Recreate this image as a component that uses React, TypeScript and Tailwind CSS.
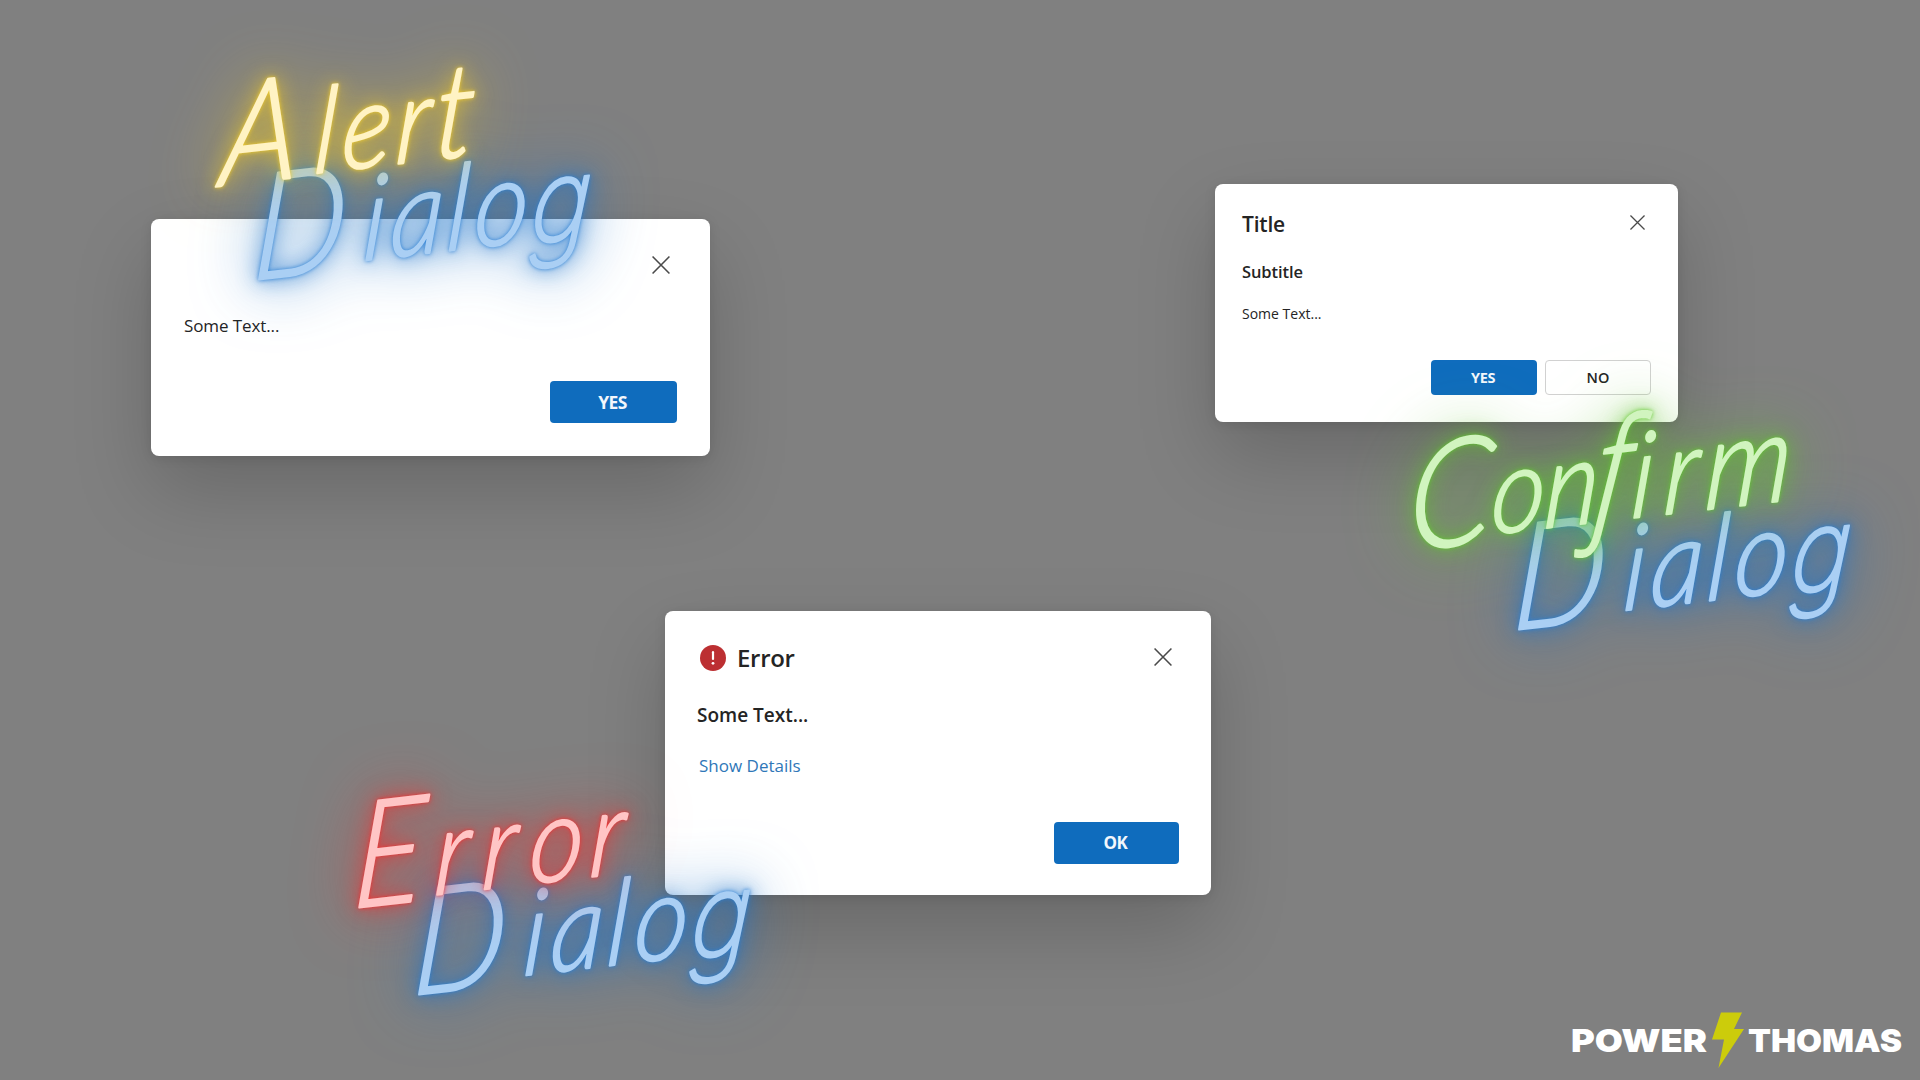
import React from "react";

type Face = "Lato" | "Open Sans" | "Inter";
type Glyph = { ch: string; x: number; size?: number; dy?: number; face?: Face };

const DIALOG: Glyph[] = [
  { ch: "D", x: -3, size: 152, dy: 7 },
  { ch: "i", x: 125 },
  { ch: "a", x: 157 },
  { ch: "l", x: 222 },
  { ch: "o", x: 254 },
  { ch: "g", x: 320, size: 118, dy: 4, face: "Inter" },
];
const ALERT: Glyph[] = [
  { ch: "A", x: 8, size: 148, dy: 2 },
  { ch: "l", x: 117 },
  { ch: "e", x: 149 },
  { ch: "r", x: 212 },
  { ch: "t", x: 257, size: 134 },
];
const CONFIRM: Glyph[] = [
  { ch: "C", x: 1, size: 154, dy: 7 },
  { ch: "o", x: 97 },
  { ch: "n", x: 159 },
  { ch: "f", x: 217, size: 142, face: "Open Sans" },
  { ch: "i", x: 260 },
  { ch: "r", x: 298 },
  { ch: "m", x: 346, size: 128 },
];
const ERROR: Glyph[] = [
  { ch: "E", x: -3, size: 152, dy: 4 },
  { ch: "r", x: 92 },
  { ch: "r", x: 147 },
  { ch: "o", x: 202 },
  { ch: "r", x: 272 },
];

const FACES: Record<Face, string> = {
  Lato: "font-['Lato']",
  "Open Sans": "font-['Open_Sans']",
  Inter: "font-['Inter'] font-extralight",
};

const TONES = {
  yellow: "fill-[#fff3c4] stroke-[#fff3c4] [filter:drop-shadow(0_0_2px_#f5cf2a)_drop-shadow(0_0_10px_#e8c52ac0)_drop-shadow(0_0_30px_#e8c52ab0)]",
  blue: "fill-[#aacff4] stroke-[#aacff4] [filter:drop-shadow(0_0_2px_#2a7fd4)_drop-shadow(0_0_10px_#1f74c9c0)_drop-shadow(0_0_30px_#1f74c9b0)]",
  green: "fill-[#d1f4bf] stroke-[#d1f4bf] [filter:drop-shadow(0_0_2px_#63c92f)_drop-shadow(0_0_10px_#5fc02cc0)_drop-shadow(0_0_30px_#5fc02cb0)]",
  red: "fill-[#ffc5c5] stroke-[#ffc5c5] [filter:drop-shadow(0_0_2px_#f53030)_drop-shadow(0_0_10px_#ee3535c0)_drop-shadow(0_0_30px_#ee3535b0)]",
};

function NeonWord({ glyphs, x, y, tone }: { glyphs: Glyph[]; x: number; y: number; tone: keyof typeof TONES }) {
  return (
    <g className={TONES[tone]}>
      <text
        transform={`matrix(.86 -.099 -.07 .98 ${x} ${y})`}
        className="font-light italic"
        fontSize={122}
        strokeWidth={2.4}
        strokeLinejoin="round"
      >
        {glyphs.map((g, i) => (
          <tspan key={i} x={g.x} y={g.dy ?? 0} fontSize={g.size} className={FACES[g.face ?? "Lato"]}>
            {g.ch}
          </tspan>
        ))}
      </text>
    </g>
  );
}

function Close({ className }: { className: string }) {
  return (
    <svg viewBox="0 0 16 16" className={className} fill="none" stroke="#4a4a4a" strokeWidth="1.4">
      <path d="M.5.5l15 15M15.5.5l-15 15" />
    </svg>
  );
}

const card = "absolute flex flex-col rounded-lg bg-white text-[#242424] shadow-[0_34px_80px_rgba(0,0,0,0.19),0_2px_12px_rgba(0,0,0,0.1)]";
const primary = "flex items-center justify-center rounded bg-[#0f6cbd] font-bold text-[#f2f7fc]";

export default function App() {
  return (
    <main className="relative h-[1080px] w-[1920px] overflow-hidden bg-[#808080] font-['Open_Sans','Noto_Sans',sans-serif]">
      <section className={`${card} left-[151px] top-[219px] h-[237px] w-[559px] px-[33px]`}>
        <header className="flex h-[38px] justify-end pr-[7px] pt-[37px]">
          <Close className="h-[18px] w-[18px] shrink-0" />
        </header>
        <p className="mt-[54px] h-[30px] text-[17px] leading-[30px] tracking-[-0.1px]">Some Text...</p>
        <footer className="mt-[40px] flex justify-end">
          <button className={`${primary} h-[42px] w-[127px] pr-[2px] text-[17.5px] tracking-[-0.6px]`}>YES</button>
        </footer>
      </section>

      <section className={`${card} left-[1215px] top-[184px] h-[238px] w-[463px] px-[27px]`}>
        <header className="flex h-[56px] items-end justify-between">
          <h2 className="text-[21px] font-semibold leading-[32px] tracking-[-0.2px]">Title</h2>
          <Close className="mr-[6px] mb-[10px] h-[15px] w-[15px]" />
        </header>
        <h3 className="mt-[19px] h-[26px] text-[16.5px] font-semibold leading-[26px] tracking-[-0.1px]">Subtitle</h3>
        <p className="mt-4 h-[26px] text-[14px] leading-[26px]">Some Text...</p>
        <footer className="mt-[33px] flex justify-end gap-2">
          <button className={`${primary} h-[35px] w-[106px] pr-[2px] text-[14.5px] tracking-[-0.4px]`}>YES</button>
          <button className="flex h-[35px] w-[106px] items-center justify-center rounded border border-[#d1d1d1] text-[14.5px] font-semibold">NO</button>
        </footer>
      </section>

      <section className={`${card} left-[665px] top-[611px] h-[284px] w-[546px] px-[32px]`}>
        <header className="flex h-[65px] items-end">
          <svg viewBox="0 0 26 26" className="mb-[5px] ml-[3px] h-[26px] w-[26px]">
            <circle cx="13" cy="13" r="13" fill="#bc2f32" />
            <path d="M13 7.2v6.8" stroke="white" strokeWidth="2.2" strokeLinecap="round" />
            <circle cx="13" cy="18.3" r="1.4" fill="white" />
          </svg>
          <h2 className="ml-[11px] text-[24px] font-semibold leading-[36px] tracking-[-0.3px]">Error</h2>
          <Close className="mb-[10px] ml-auto mr-[7px] h-[18px] w-[18px]" />
        </header>
        <p className="mt-[23px] h-[32px] text-[19px] font-semibold leading-[32px]">Some Text...</p>
        <a className="ml-[2px] mt-5 h-[30px] text-[17px] leading-[30px] text-[#2f77b8]">Show Details</a>
        <footer className="mt-[41px] flex justify-end">
          <button className={`${primary} h-[42px] w-[125px] pr-[2px] text-[17px] tracking-[-0.4px]`}>OK</button>
        </footer>
      </section>

      <svg className="absolute inset-0 h-full w-full" viewBox="0 0 1920 1080">
        <NeonWord glyphs={DIALOG} x={254} y={273} tone="blue" />
        <NeonWord glyphs={ALERT} x={212} y={185} tone="yellow" />
        <NeonWord glyphs={DIALOG} x={1514} y={623} tone="blue" />
        <NeonWord glyphs={CONFIRM} x={1406} y={544} tone="green" />
        <NeonWord glyphs={DIALOG} x={414} y={988} tone="blue" />
        <NeonWord glyphs={ERROR} x={354} y={904} tone="red" />
        <g className="fill-white font-['Inter',sans-serif] font-black" fontSize="32">
          <text x="1571" y="1052" textLength="136" lengthAdjust="spacingAndGlyphs">POWER</text>
          <text x="1748" y="1052" textLength="154" lengthAdjust="spacingAndGlyphs">THOMAS</text>
        </g>
        <path d="M1721 1012.500H1742L1734 1029H1744L1718.500 1068L1724 1039.500H1712Z" fill="#cccc0b" />
      </svg>
    </main>
  );
}
